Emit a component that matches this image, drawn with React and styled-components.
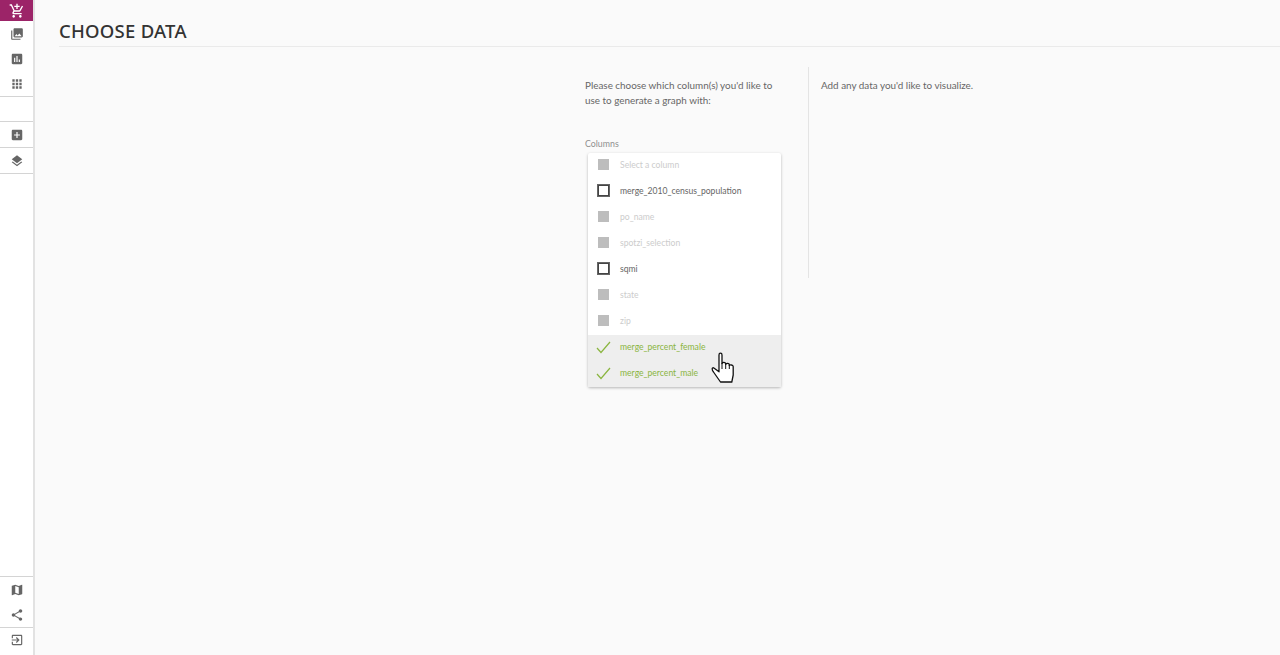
import React from "react";
import styled, { createGlobalStyle } from "styled-components";

const Global = createGlobalStyle`
  html, body { margin: 0; padding: 0; height: 100%; background: #fafafa; overflow: hidden; }
  body { font-family: "Lato", "Noto Sans", sans-serif; color: #333; }
  #root { height: 100%; }
`;
const Page = styled.div`display: flex; height: 655px;`;
const Sidebar = styled.nav`
  width: 33px; flex: none; background: #fff; display: flex; flex-direction: column;
  border-right: 2px solid #e2e2e2; justify-content: space-between; padding-bottom: 3px; box-sizing: content-box;
  height: 652px;
`;
const Group = styled.div`
  display: flex; flex-direction: column;
  ${p => p.$line ? "border-bottom: 1px solid #d4d4d4;" : ""}
  ${p => p.$top ? "border-top: 1px solid #d4d4d4;" : ""}
`;
const Spacer = styled.div`height: 24px; border-bottom: 1px solid #d4d4d4;`;
const NavItem = styled.div`
  height: ${p => p.$h || 25}px; display: flex; align-items: center; justify-content: center;
  color: ${p => p.$active ? "#fff" : "#666"};
  background: ${p => p.$active ? "#9c2468" : "transparent"};
`;
const Main = styled.main`flex: 1; padding: 0 0 0 24px; min-width: 0;`;
const Title = styled.h1`
  margin: 0; height: 47px; box-sizing: border-box; padding-top: 18px;
  font-family: "Noto Sans", sans-serif;
  font-size: 18.5px; line-height: 26px; font-weight: 500; color: #333; letter-spacing: .25px;
  border-bottom: 1px solid #eaeaea; white-space: nowrap;
`;
const Content = styled.div`display: flex; padding: 20px 0 0 526px;`;
const Left = styled.section`
  width: 224px; box-sizing: border-box; border-right: 1px solid #e4e4e4; height: 211px; padding-top: 11px; flex: none;
`;
const Prose = styled.p`margin: 0; font-size: 9.9px; line-height: 15px; color: #666; width: ${p => p.$w || "auto"};`;
const Right = styled.section`padding: 11px 0 0 12px;`;
const FieldLabel = styled.div`margin-top: 30px; font-size: 8.8px; line-height: 12px; color: #8f8f8f;`;
const List = styled.div`
  position: relative; margin: 3px 0 0 3px; width: 193px; background: #fff;
  box-shadow: 0 1px 3px rgba(0,0,0,.28); border-radius: 2px;
`;
const Row = styled.div`
  height: 26px; display: flex; align-items: center; padding-left: 9px;
  background: ${p => p.$selected ? "#eeeeee" : "transparent"};
`;
const BoxSlot = styled.div`width: 13px; height: 13px; margin-right: 11px; position: relative; flex: none; margin-top: -2px;`;
const Disabled = styled.div`width: 11px; height: 11px; margin-left: 1px; background: #bdbdbd;`;
const Empty = styled.div`width: 9px; height: 9px; margin-left: 1px; border: 1px solid #444; outline: .5px solid #666; background: #fff;`;
const RowText = styled.span`
  font-size: 8.6px; white-space: nowrap; margin: -2px 0 0 -1px;
  color: ${p => p.$state === "disabled" ? "#cccccc" : p.$state === "selected" ? "#8ab53f" : "#666"};
`;
const Cursor = styled.svg`position: absolute; left: 123px; top: 199px; pointer-events: none;`;

const I = ({ children }) => <svg width="14" height="14" viewBox="0 0 24 24" fill="currentColor">{children}</svg>;

const Cart = () => <svg width="16" height="16" viewBox="0 0 24 24" fill="currentColor"><path d="M11 9h2V6h3V4h-3V1h-2v3H8v2h3v3zm-4 9c-1.100 0-1.990.9-1.990 2S5.900 22 7 22s2-.9 2-2-.9-2-2-2zm10 0c-1.100 0-1.990.9-1.990 2s.89 2 1.990 2 2-.9 2-2-.9-2-2-2zm-9.830-3.250l.03-.12.9-1.630h7.450c.75 0 1.410-.41 1.750-1.030l3.860-7.010L19.420 4h-.01l-1.100 2-2.760 5H8.530l-.13-.27L6.160 6l-.95-2-.94-2H1v2h2l3.600 7.590-1.350 2.450c-.16.28-.25.61-.25.96 0 1.100.9 2 2 2h12v-2H7.420c-.13 0-.25-.11-.25-.25z"/></svg>;
const Photos = () => <I><path d="M22 16V4c0-1.100-.9-2-2-2H8c-1.100 0-2 .9-2 2v12c0 1.100.9 2 2 2h12c1.100 0 2-.9 2-2zm-11-4l2 2.700 3-3.700 4 5H8l3-4zM2 6v14c0 1.100.9 2 2 2h14v-2H4V6H2z"/></I>;
const Chart = () => <I><path d="M19 3H5c-1.100 0-2 .9-2 2v14c0 1.100.9 2 2 2h14c1.100 0 2-.9 2-2V5c0-1.100-.9-2-2-2zM9 17H7v-7h2v7zm4 0h-2V7h2v10zm4 0h-2v-4h2v4z"/></I>;
const Apps = () => <I><path d="M4 8h4V4H4v4zm6 12h4v-4h-4v4zm-6 0h4v-4H4v4zm0-6h4v-4H4v4zm6 0h4v-4h-4v4zm6-10v4h4V4h-4zm-6 4h4V4h-4v4zm6 6h4v-4h-4v4zm0 6h4v-4h-4v4z"/></I>;
const Plus = () => <I><path d="M19 3H5c-1.110 0-2 .9-2 2v14c0 1.100.89 2 2 2h14c1.100 0 2-.9 2-2V5c0-1.100-.9-2-2-2zm-2 10h-4v4h-2v-4H7v-2h4V7h2v4h4v2z"/></I>;
const Layers = () => <I><path d="M11.990 18.540l-7.370-5.730L3 14.070l9 7 9-7-1.630-1.270-7.380 5.740zM12 16l7.360-5.730L21 9l-9-7-9 7 1.630 1.270L12 16z"/></I>;
const MapIc = () => <I><path d="M20.500 3l-.16.030L15 5.100 9 3 3.360 4.900c-.21.070-.36.250-.36.480V20.500c0 .28.220.5.500.5l.16-.03L9 18.900l6 2.100 5.640-1.900c.21-.07.36-.25.36-.48V3.500c0-.28-.22-.5-.5-.5zM15 19l-6-2.110V5l6 2.110V19z"/></I>;
const Share = () => <I><path d="M18 16.080c-.76 0-1.440.3-1.960.77L8.910 12.700c.05-.23.090-.46.090-.7s-.04-.47-.09-.7l7.050-4.110c.54.5 1.250.81 2.040.81 1.660 0 3-1.340 3-3s-1.340-3-3-3-3 1.340-3 3c0 .24.040.47.090.7L8.040 9.810C7.500 9.310 6.790 9 6 9c-1.660 0-3 1.340-3 3s1.340 3 3 3c.79 0 1.500-.31 2.040-.81l7.120 4.160c-.05.21-.08.43-.08.65 0 1.610 1.310 2.920 2.920 2.920s2.920-1.310 2.920-2.920-1.310-2.920-2.920-2.920z"/></I>;
const ExitIc = () => <I><path d="M10.090 15.590L11.500 17l5-5-5-5-1.410 1.410L12.670 11H3v2h9.670l-2.580 2.590zM19 3H5c-1.110 0-2 .9-2 2v4h2V5h14v14H5v-4H3v4c0 1.100.89 2 2 2h14c1.100 0 2-.9 2-2V5c0-1.100-.9-2-2-2z"/></I>;

const Check = () => <svg width="15" height="13" viewBox="0 0 15 13" fill="none" stroke="#8ab53f" strokeWidth="1.200" style={{ marginLeft: -1, display: "block" }}><path d="M1 7l4 4.500L14 1"/></svg>;

const rows = [
  ["Select a column", "disabled"],
  ["merge_2010_census_population", "empty"],
  ["po_name", "disabled"],
  ["spotzi_selection", "disabled"],
  ["sqmi", "empty"],
  ["state", "disabled"],
  ["zip", "disabled"],
  ["merge_percent_female", "selected"],
  ["merge_percent_male", "selected"],
];

export default function App() {
  return (
    <Page>
      <Global />
      <Sidebar>
        <div>
          <Group>
            <NavItem $active $h={21}><Cart /></NavItem>
          </Group>
          <Group $line>
            <NavItem><Photos /></NavItem>
            <NavItem><Chart /></NavItem>
            <NavItem><Apps /></NavItem>
          </Group>
          <Spacer />
          <Group $line><NavItem><Plus /></NavItem></Group>
          <Group $line><NavItem><Layers /></NavItem></Group>
        </div>
        <div>
          <Group $top $line>
            <NavItem><MapIc /></NavItem>
            <NavItem><Share /></NavItem>
          </Group>
          <Group><NavItem $h={24}><ExitIc /></NavItem></Group>
        </div>
      </Sidebar>
      <Main>
        <Title>CHOOSE DATA</Title>
        <Content>
          <Left>
            <Prose $w="200px">Please choose which column(s) you'd like to use to generate a graph with:</Prose>
            <FieldLabel>Columns</FieldLabel>
            <List>
              {rows.map(([label, state]) => (
                <Row key={label} $selected={state === "selected"}>
                  <BoxSlot>
                    {state === "disabled" && <Disabled />}
                    {state === "empty" && <Empty />}
                    {state === "selected" && <Check />}
                  </BoxSlot>
                  <RowText $state={state}>{label}</RowText>
                </Row>
              ))}
              <Cursor width="26" height="32" viewBox="0 0 26 32">
                <path d="M8 3c0-2.400 3-2.400 3 0v8.500c.6-1.400 3.400-1.400 3.600 0l.2.800c.6-1.200 3.400-1.200 3.500.3v.9c.6-.9 3.700-.8 3.900 1V23l-1.400 7H9.500L2.500 20c-2-2.500-1.500-4.500 0-4.200l5.500 4V3z" fill="#fff" stroke="#111" strokeWidth="1.300" strokeLinejoin="round"/>
                <path d="M11 11v6M14.700 12v5M18.300 13v4" stroke="#111" strokeWidth="1"/>
              </Cursor>
            </List>
          </Left>
          <Right>
            <Prose>Add any data you'd like to visualize.</Prose>
          </Right>
        </Content>
      </Main>
    </Page>
  );
}
